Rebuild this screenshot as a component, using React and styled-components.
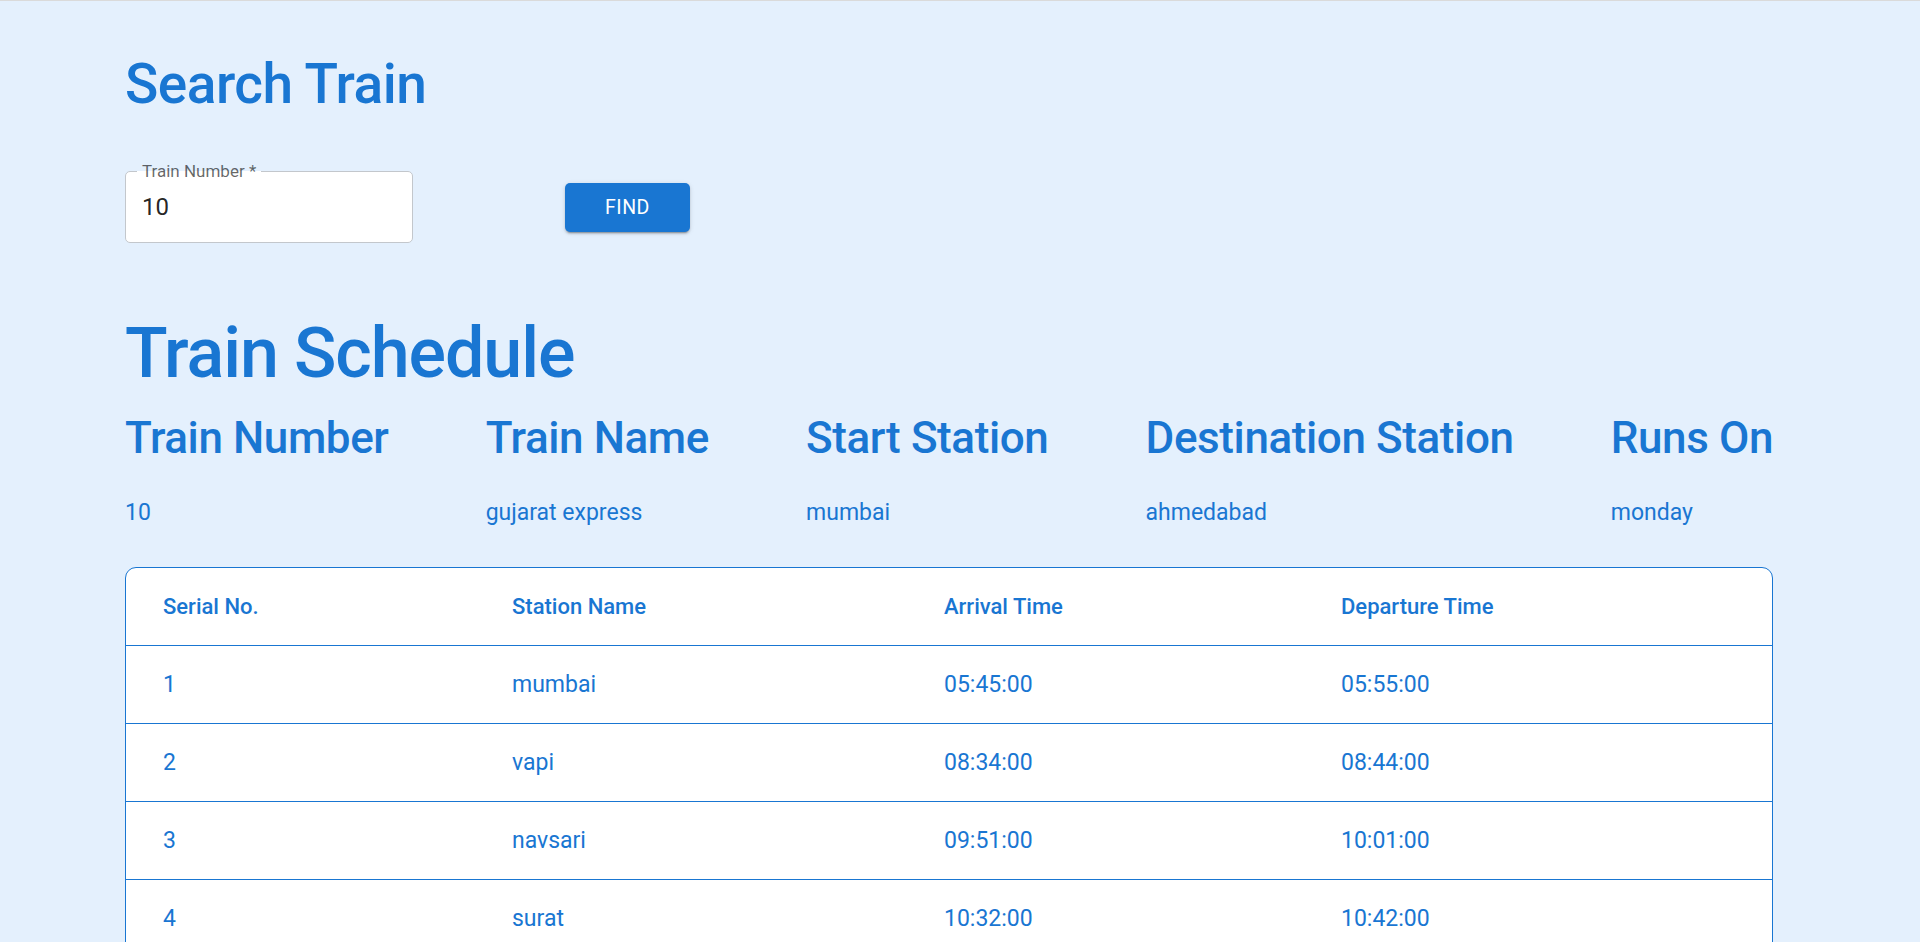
import React from "react";
import styled, { createGlobalStyle } from "styled-components";

const PAGE_BG = "#e4f0fd";
const BLUE = "#1976d2";

const GlobalStyle = createGlobalStyle`
  html, body {
    margin: 0;
    padding: 0;
    background: ${PAGE_BG};
    font-family: Roboto, "Liberation Sans", Arial, sans-serif;
  }
  body {
    border-top: 1px solid #dadada;
  }
  ::-webkit-scrollbar {
    width: 17px;
  }
  ::-webkit-scrollbar-track {
    background: #f1f1f1;
  }
  ::-webkit-scrollbar-thumb {
    background: #c1c1c1;
    border-left: 2px solid #f1f1f1;
    border-right: 2px solid #f1f1f1;
  }
  ::-webkit-scrollbar-button:single-button {
    height: 17px;
    background: #f1f1f1;
  }
`;

const Page = styled.main`
  width: 1648px;
  margin-left: 125px;
  padding: 50px 0 80px;
`;

const Heading = styled.h1`
  margin: ${(p) => p.$mt || 0}px 0 0;
  font-size: ${(p) => p.$size}px;
  line-height: 1.2;
  font-weight: 500;
  letter-spacing: ${(p) => p.$ls || 0}px;
  color: ${BLUE};
`;

const SearchRow = styled.form`
  display: flex;
  align-items: center;
  gap: 152px;
  margin-top: 54px;
`;

const Field = styled.div`
  position: relative;
  box-sizing: border-box;
  width: 288px;
  height: 72px;
  border: 1px solid #c3c7cc;
  border-radius: 5px;
  background: #fff;
  display: flex;
  align-items: center;
`;

const FieldLabel = styled.label`
  position: absolute;
  top: -11px;
  left: 11px;
  padding: 0 5px;
  font-size: 17px;
  line-height: 20px;
  color: rgba(0, 0, 0, 0.6);
  background: linear-gradient(to bottom, ${PAGE_BG} 50%, #fff 50%);
`;

const FieldInput = styled.input`
  width: 100%;
  border: 0;
  outline: 0;
  background: transparent;
  padding: 0 16px;
  font-family: inherit;
  font-size: 24px;
  color: rgba(0, 0, 0, 0.87);
`;

const FindButton = styled.button`
  width: 125px;
  height: 49px;
  border: 0;
  border-radius: 5px;
  background: ${BLUE};
  color: #fff;
  font-family: inherit;
  font-size: 19.5px;
  font-weight: 400;
  letter-spacing: 0.5px;
  text-transform: uppercase;
  cursor: pointer;
  box-shadow: 0px 3px 1px -2px rgba(0, 0, 0, 0.2),
    0px 2px 2px 0px rgba(0, 0, 0, 0.14), 0px 1px 5px 0px rgba(0, 0, 0, 0.12);
`;

const InfoRow = styled.div`
  display: flex;
  justify-content: space-between;
  margin-top: 16px;
`;

const InfoCol = styled.div`
  display: flex;
  flex-direction: column;
  gap: 31px;
`;

const InfoTitle = styled.h3`
  margin: 0;
  font-size: 44px;
  line-height: 54px;
  font-weight: 500;
  letter-spacing: -0.4px;
  color: ${BLUE};
`;

const InfoValue = styled.p`
  margin: 0;
  font-size: 23px;
  line-height: 1.5;
  color: ${BLUE};
`;

const Table = styled.table`
  margin-top: 36px;
  width: 100%;
  table-layout: fixed;
  border-collapse: separate;
  border-spacing: 0;
  border: 1px solid ${BLUE};
  border-radius: 11px;
  background: #fff;
  overflow: hidden;
`;

const Cell = styled.td`
  box-sizing: border-box;
  height: 78px;
  padding: 0 0 0 37px;
  border-bottom: 1px solid ${BLUE};
  text-align: left;
  color: ${BLUE};
  font-size: ${(p) => (p.$head ? 22 : 23)}px;
  font-weight: ${(p) => (p.$head ? 500 : 400)};
  tbody tr:last-child > & {
    border-bottom: 0;
  }
`;

const info = [
  ["Train Number", "10"],
  ["Train Name", "gujarat express"],
  ["Start Station", "mumbai"],
  ["Destination Station", "ahmedabad"],
  ["Runs On", "monday"],
];

const stops = [
  [1, "mumbai", "05:45:00", "05:55:00"],
  [2, "vapi", "08:34:00", "08:44:00"],
  [3, "navsari", "09:51:00", "10:01:00"],
  [4, "surat", "10:32:00", "10:42:00"],
  [5, "bharuch", "11:40:00", "11:50:00"],
  [6, "vadodara", "12:45:00", "12:55:00"],
  [7, "anand", "13:30:00", "13:40:00"],
  [8, "nadiad", "13:58:00", "14:08:00"],
  [9, "ahmedabad", "14:50:00", "15:00:00"],
];

export default function App() {
  return (
    <>
      <GlobalStyle />
      <Page>
        <Heading $size={55} $ls={-0.5}>
          Search Train
        </Heading>
        <SearchRow onSubmit={(e) => e.preventDefault()}>
          <Field>
            <FieldLabel htmlFor="train-number">Train Number *</FieldLabel>
            <FieldInput id="train-number" defaultValue="10" />
          </Field>
          <FindButton type="submit">Find</FindButton>
        </SearchRow>

        <Heading as="h2" $size={70} $ls={-1.1} $mt={68}>
          Train Schedule
        </Heading>
        <InfoRow>
          {info.map(([t, v]) => (
            <InfoCol key={t}>
              <InfoTitle>{t}</InfoTitle>
              <InfoValue>{v}</InfoValue>
            </InfoCol>
          ))}
        </InfoRow>

        <Table>
          <colgroup>
            <col style={{ width: 349 }} />
            <col style={{ width: 432 }} />
            <col style={{ width: 397 }} />
            <col />
          </colgroup>
          <thead>
            <tr>
              <Cell as="th" $head>Serial No.</Cell>
              <Cell as="th" $head>Station Name</Cell>
              <Cell as="th" $head>Arrival Time</Cell>
              <Cell as="th" $head>Departure Time</Cell>
            </tr>
          </thead>
          <tbody>
            {stops.map(([n, name, arr, dep]) => (
              <tr key={n}>
                <Cell>{n}</Cell>
                <Cell>{name}</Cell>
                <Cell>{arr}</Cell>
                <Cell>{dep}</Cell>
              </tr>
            ))}
          </tbody>
        </Table>
      </Page>
    </>
  );
}
